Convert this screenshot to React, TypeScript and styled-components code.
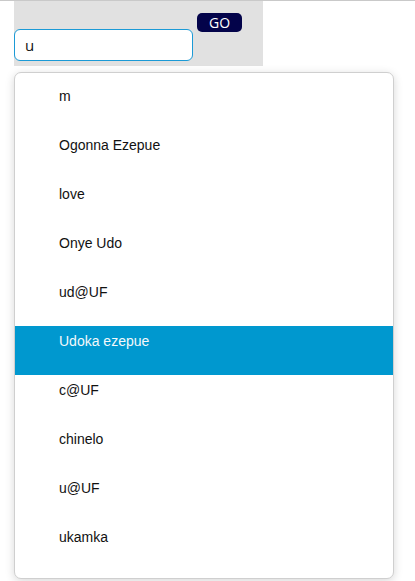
import { useState } from 'react'
import styled, { createGlobalStyle } from 'styled-components'

const names = [
  'm',
  'Ogonna Ezepue',
  'love',
  'Onye Udo',
  'ud@UF',
  'Udoka ezepue',
  'c@UF',
  'chinelo',
  'u@UF',
  'ukamka',
]

const App = () => {
  const [query, setQuery] = useState('u')
  const active = 5

  return (
    <Page>
      <GlobalStyle />
      <SearchBar>
        <SearchInput
          value={query}
          onChange={(e) => setQuery(e.target.value)}
          autoFocus
        />
        <GoButton>GO</GoButton>
      </SearchBar>
      <Dropdown>
        {names.map((name, i) => (
          <Option key={name} $active={i === active}>
            {name}
          </Option>
        ))}
      </Dropdown>
    </Page>
  )
}

const GlobalStyle = createGlobalStyle`
  body {
    margin: 0;
    background: #fff;
    font-family: 'Liberation Sans', Arial, sans-serif;
  }
`

const Page = styled.div`
  position: relative;
  height: 581px;
  border-top: 1px solid #c9c9c9;
  padding-left: 14px;
  overflow: hidden;
`

const SearchBar = styled.div`
  width: 249px;
  height: 65px;
  background: #e1e1e1;
  display: flex;
  align-items: flex-start;
  gap: 4px;
`

const SearchInput = styled.input`
  box-sizing: border-box;
  margin-top: 28px;
  width: 179px;
  height: 32px;
  border: 1px solid #1b9ad6;
  border-radius: 6px;
  padding: 0 10px;
  font-family: 'Open Sans', 'Noto Sans', sans-serif;
  font-size: 15px;
  color: #111;
  outline: none;
  background: #fff;
`

const GoButton = styled.button`
  margin-top: 12px;
  width: 45px;
  height: 19px;
  border: none;
  border-radius: 5px;
  background: #03034a;
  color: #fff;
  font-family: 'Open Sans', 'Noto Sans', sans-serif;
  font-size: 14px;
  line-height: 19px;
  padding: 0;
  cursor: pointer;
`

const Dropdown = styled.ul`
  position: absolute;
  top: 71px;
  left: 14px;
  width: 380px;
  box-sizing: border-box;
  margin: 0;
  padding: 8px 0 7px;
  list-style: none;
  background: #fff;
  border: 1px solid #cfcfcf;
  border-radius: 7px;
  box-shadow: 0 2px 10px rgba(0, 0, 0, 0.16);
`

const Option = styled.li<{ $active?: boolean }>`
  height: 49px;
  box-sizing: border-box;
  padding: 7px 0 0 44px;
  font-size: 14px;
  line-height: 16px;
  color: ${(p) => (p.$active ? '#f4f8fb' : '#111')};
  background: ${(p) => (p.$active ? '#0098cf' : 'transparent')};
`

export default App
